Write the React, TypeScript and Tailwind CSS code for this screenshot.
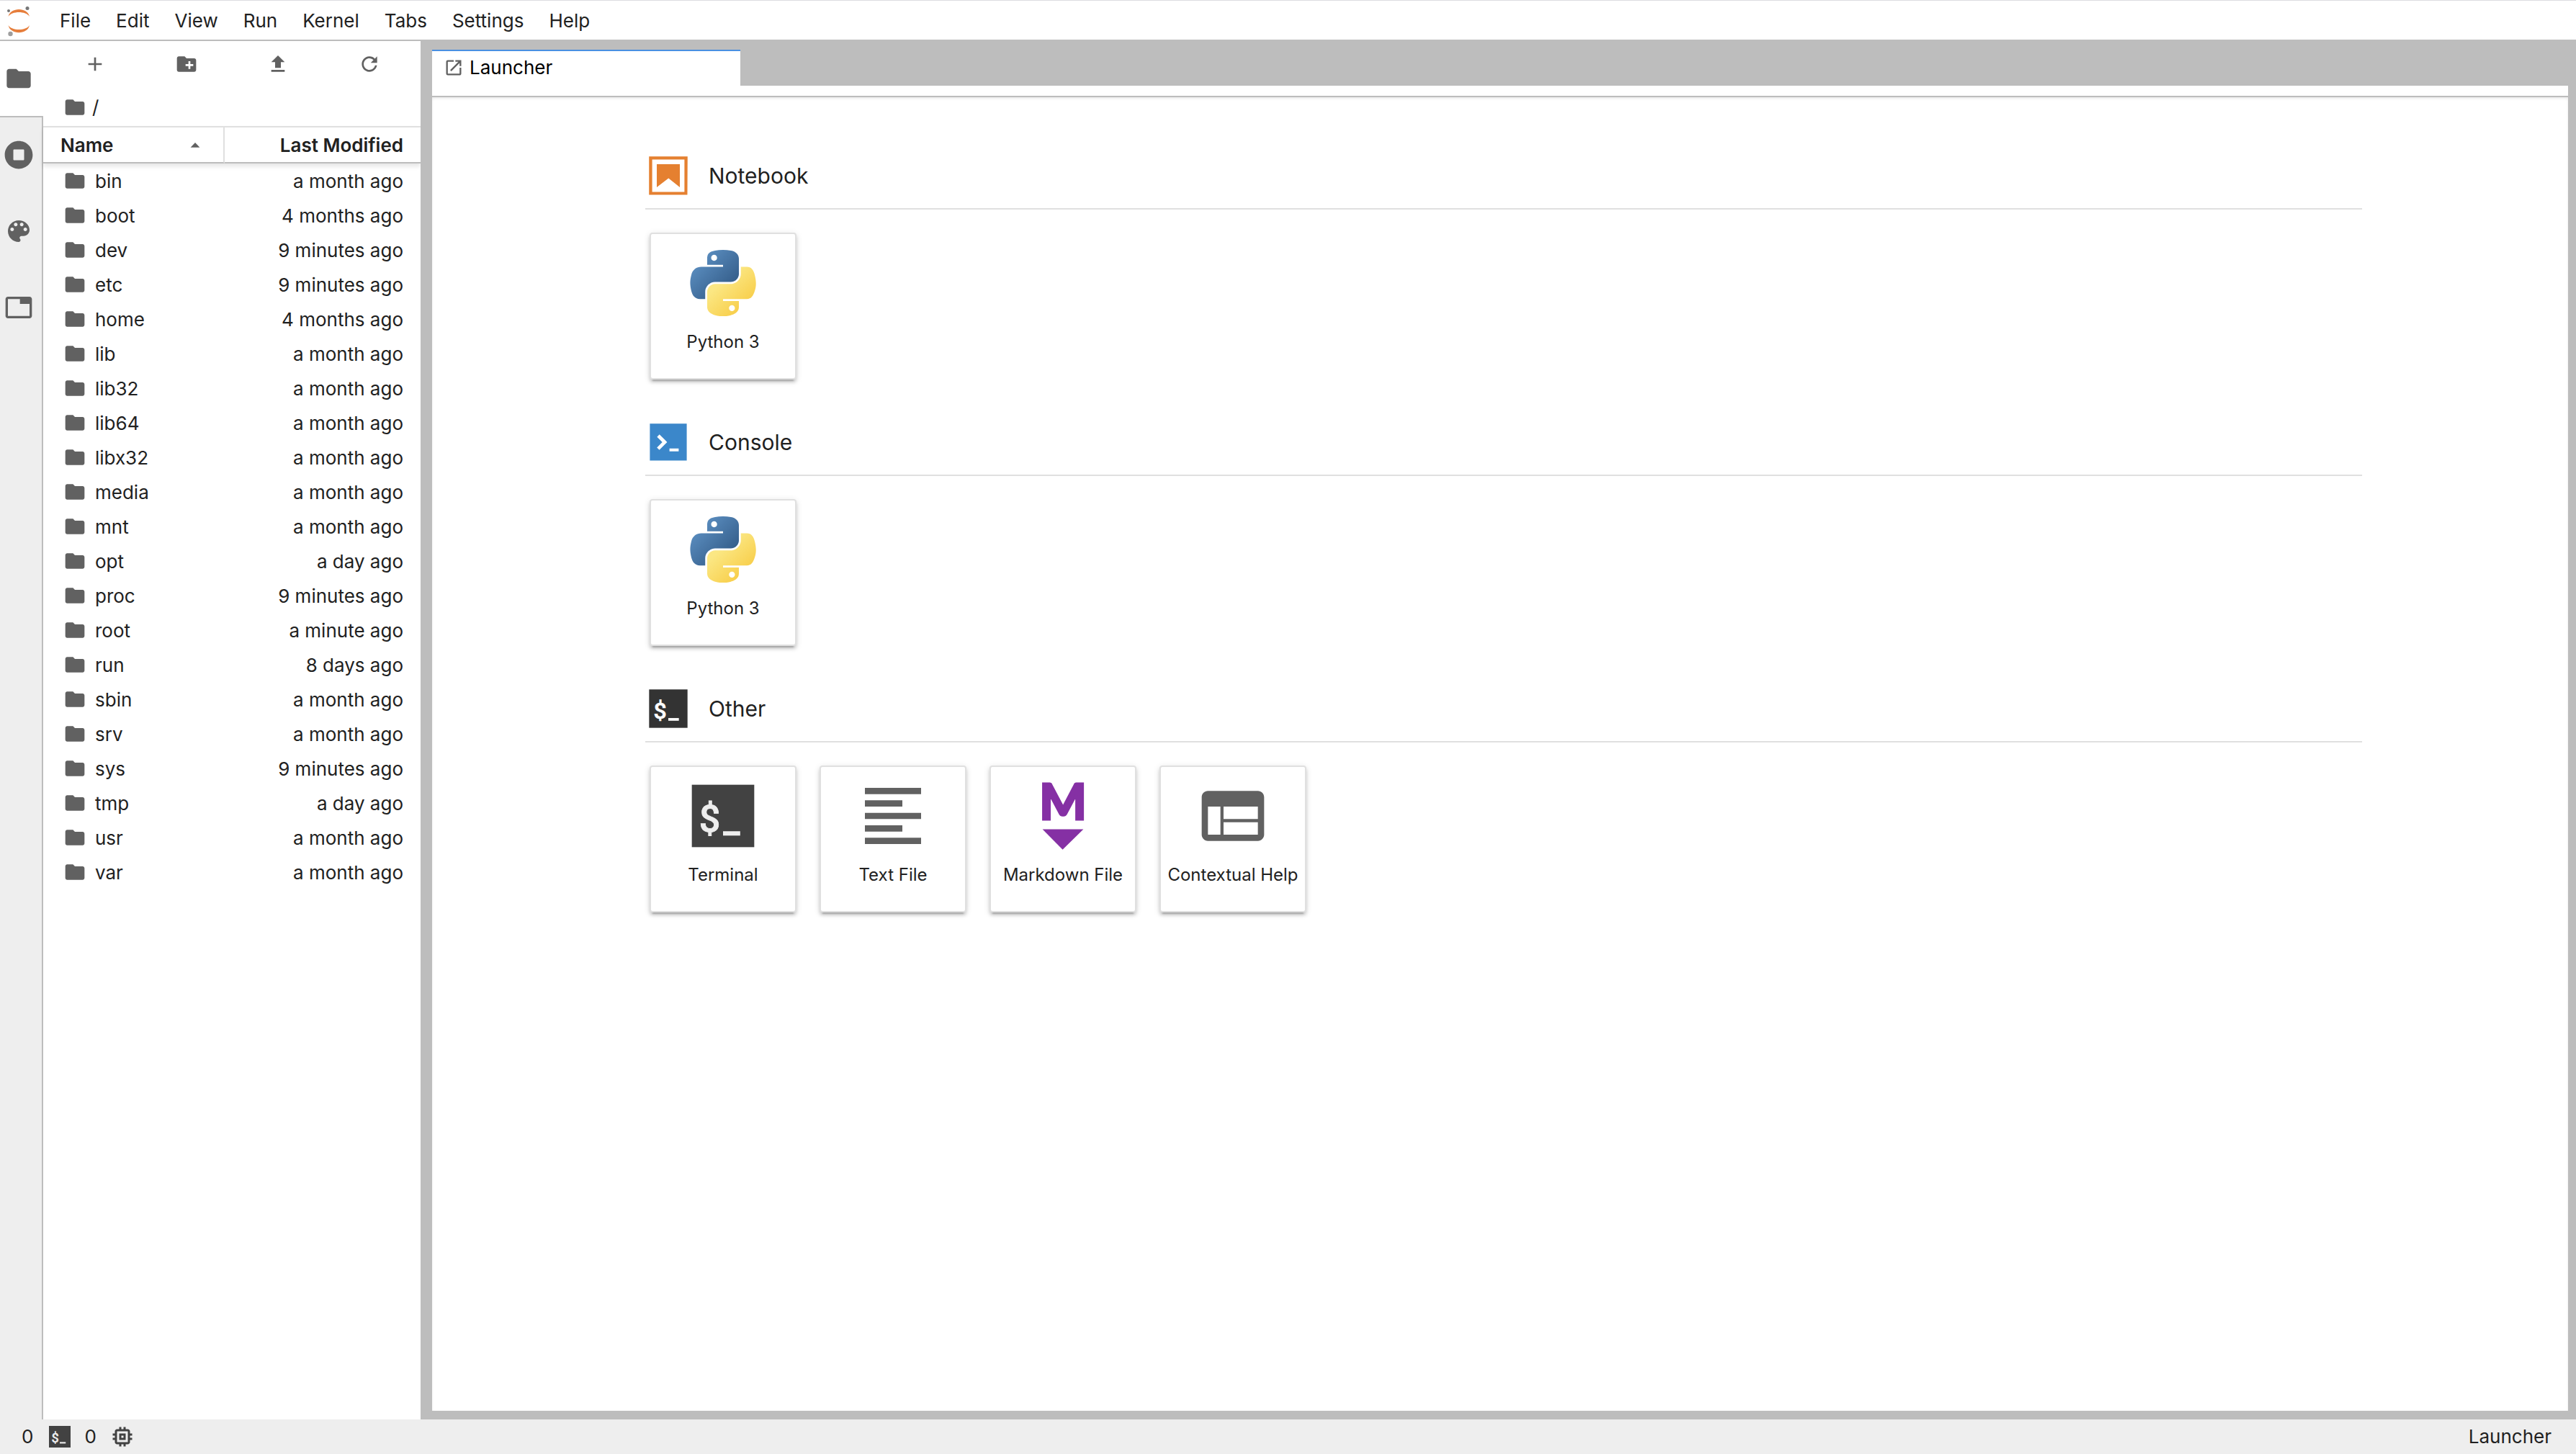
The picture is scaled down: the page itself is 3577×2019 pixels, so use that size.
import React from "react";

const FOLDER =
  "M10 4H4c-1.1 0-1.99.9-1.99 2L2 18c0 1.1.9 2 2 2h16c1.1 0 2-.9 2-2V8c0-1.1-.9-2-2-2h-8l-2-2z";

function Icon({ d, className, box = 24 }: { d: string; className: string; box?: number }) {
  return (
    <svg viewBox={`0 0 ${box} ${box}`} className={className} fill="currentColor" aria-hidden="true">
      <path d={d} />
    </svg>
  );
}

function JupyterLogo() {
  return (
    <svg viewBox="0 0 52 54" className="h-[54px] w-[52px] shrink-0" aria-label="Jupyter">
      <path d="M11.5 22C14 8.5 38.5 8.5 41 22C36 14 16.500 14 11.500 22z" fill="#e67e3c" />
      <path d="M11.500 34C14 47.500 38.500 47.500 41 34C36 42 16.500 42 11.500 34z" fill="#e67e3c" />
      <circle cx="12" cy="14" r="2" fill="#767677" />
      <circle cx="38" cy="10.500" r="2.500" fill="#767677" />
      <circle cx="14.500" cy="46" r="3.200" fill="#9e9e9e" />
    </svg>
  );
}

function PythonLogo() {
  return (
    <svg viewBox="0 0 111 112" className="h-[92px] w-[92px]" aria-hidden="true">
      <defs>
        <linearGradient id="py-blue" x1="0.1" y1="0.1" x2="0.75" y2="0.75">
          <stop offset="0" stopColor="#5f93c6" />
          <stop offset="1" stopColor="#38628f" />
        </linearGradient>
        <linearGradient id="py-yellow" x1="0.3" y1="0.3" x2="0.75" y2="0.8">
          <stop offset="0" stopColor="#fbe783" />
          <stop offset="1" stopColor="#f8cf4c" />
        </linearGradient>
      </defs>
      <path
        fill="url(#py-blue)"
        d="M54.919 0C50.335.022 45.958.413 42.106 1.095 30.760 3.099 28.700 7.295 28.700 15.032V25.251H55.513V28.657H18.638C10.845 28.657 4.022 33.341 1.888 42.251-.574 52.464-.683 58.837 1.888 69.501 3.793 77.439 8.345 83.095 16.138 83.095H25.356V70.845C25.356 61.995 33.013 54.188 42.106 54.188H68.888C76.342 54.188 82.294 48.050 82.294 40.563V15.032C82.294 7.766 76.164 2.307 68.888 1.095 64.282.328 59.502-.020 54.919 0zM40.419 8.220C43.188 8.220 45.450 10.518 45.450 13.345 45.450 16.161 43.188 18.438 40.419 18.438 37.639 18.438 35.388 16.161 35.388 13.345 35.388 10.518 37.639 8.220 40.419 8.220z"
      />
      <path
        fill="url(#py-yellow)"
        d="M85.638 28.657V40.563C85.638 49.794 77.812 57.563 68.888 57.563H42.106C34.771 57.563 28.700 63.842 28.700 71.188V96.720C28.700 103.986 35.019 108.260 42.106 110.345 50.593 112.840 58.732 113.291 68.888 110.345 75.638 108.390 82.294 104.457 82.294 96.720V86.501H55.513V83.095H95.700C103.493 83.095 106.396 77.659 109.106 69.501 111.906 61.102 111.786 53.026 109.106 42.251 107.180 34.493 103.502 28.657 95.700 28.657H85.638zM70.575 93.313C73.354 93.313 75.606 95.591 75.606 98.407 75.606 101.234 73.354 103.532 70.575 103.532 67.805 103.532 65.544 101.234 65.544 98.407 65.544 95.591 67.805 93.313 70.575 93.313z"
      />
    </svg>
  );
}

function TerminalIcon({ className, bg, fg }: { className: string; bg: string; fg: string }) {
  return (
    <svg viewBox="0 0 24 24" className={className} aria-hidden="true">
      <rect x="2" y="2" width="20" height="20" fill={bg} />
      <text
        x="4.300"
        y="17.100"
        fontSize="12"
        fontWeight="500"
        fill={fg}
        stroke={fg}
        strokeWidth="0.200"
        className="font-['Roboto',sans-serif]"
      >
        $
      </text>
      <rect x="12" y="16.900" width="5.500" height="1.400" fill={fg} />
    </svg>
  );
}

function NotebookIcon() {
  return (
    <svg viewBox="0 0 22 22" className="size-16" fill="#e58030" aria-hidden="true">
      <path d="M18.700 3.300v15.400H3.300V3.300h15.400m1.500-1.500H1.800v18.300h18.300l.1-18.300z" />
      <path d="M16.500 16.500l-5.400-4.300-5.600 4.300v-11h11z" />
    </svg>
  );
}

function ConsoleIcon() {
  return (
    <svg viewBox="0 0 200 200" className="size-16" aria-hidden="true">
      <path fill="#3b87ca" d="M20 19.800h160v159.900H20z" />
      <path
        fill="#fff"
        d="M105 127.300h40v12.800h-40zM51.100 77L74 99.900l-23.300 23.300 10.500 10.500 23.300-23.300L95 99.900 84.500 89.400 61.600 66.500z"
      />
    </svg>
  );
}

function MarkdownIcon() {
  return (
    <svg viewBox="0 0 22 22" className="size-[104px] overflow-visible" fill="#8530a4" aria-hidden="true">
      <text
        x="11"
        y="12.100"
        fontSize="14.600"
        fontWeight="900"
        textAnchor="middle"
        stroke="#8530a4"
        strokeWidth="0.600"
        className="font-['Lato',sans-serif]"
      >
        M
      </text>
      <path d="M5 14.900h12l-6.100 6z" />
    </svg>
  );
}

const MENUS = ["File", "Edit", "View", "Run", "Kernel", "Tabs", "Settings", "Help"];

const FILES: [string, string][] = [
  ["bin", "a month ago"],
  ["boot", "4 months ago"],
  ["dev", "9 minutes ago"],
  ["etc", "9 minutes ago"],
  ["home", "4 months ago"],
  ["lib", "a month ago"],
  ["lib32", "a month ago"],
  ["lib64", "a month ago"],
  ["libx32", "a month ago"],
  ["media", "a month ago"],
  ["mnt", "a month ago"],
  ["opt", "a day ago"],
  ["proc", "9 minutes ago"],
  ["root", "a minute ago"],
  ["run", "8 days ago"],
  ["sbin", "a month ago"],
  ["srv", "a month ago"],
  ["sys", "9 minutes ago"],
  ["tmp", "a day ago"],
  ["usr", "a month ago"],
  ["var", "a month ago"],
];

const SIDE_TABS = [
  {
    label: "Running Terminals and Kernels",
    box: 512,
    d: "M256 8C119 8 8 119 8 256s111 248 248 248 248-111 248-248S393 8 256 8zm96 328c0 8.800-7.200 16-16 16H176c-8.800 0-16-7.200-16-16V176c0-8.800 7.200-16 16-16h160c8.800 0 16 7.200 16 16v160z",
  },
  {
    label: "Commands",
    box: 24,
    d: "M12 3c-4.970 0-9 4.030-9 9s4.030 9 9 9c.83 0 1.500-.67 1.500-1.500 0-.39-.15-.74-.39-1.010-.23-.26-.38-.61-.38-.99 0-.83.67-1.500 1.500-1.500H16c2.760 0 5-2.240 5-5 0-4.420-4.030-8-9-8zm-5.500 9c-.83 0-1.500-.67-1.500-1.500S5.670 9 6.500 9 8 9.670 8 10.500 7.330 12 6.500 12zm3-4C8.670 8 8 7.330 8 6.500S8.670 5 9.500 5s1.500.67 1.500 1.500S10.330 8 9.500 8zm5 0c-.83 0-1.500-.67-1.500-1.500S13.670 5 14.500 5s1.500.67 1.500 1.500S15.330 8 14.500 8zm3 4c-.83 0-1.500-.67-1.500-1.500S16.670 9 17.500 9s1.500.67 1.500 1.500-.67 1.500-1.500 1.500z",
  },
  {
    label: "Open Tabs",
    box: 24,
    d: "M21 3H3c-1.100 0-2 .9-2 2v14c0 1.100.9 2 2 2h18c1.100 0 2-.9 2-2V5c0-1.100-.9-2-2-2zm0 16H3V5h10v4h8v10z",
  },
];

const TOOLS = [
  { label: "New Launcher", box: 24, d: "M19 13h-6v6h-2v-6H5v-2h6V5h2v6h6v2z" },
  {
    label: "New Folder",
    box: 24,
    d: "M20 6h-8l-2-2H4c-1.110 0-1.990.89-1.990 2L2 18c0 1.110.89 2 2 2h16c1.110 0 2-.89 2-2V8c0-1.110-.89-2-2-2zm-1 8h-3v3h-2v-3h-3v-2h3V9h2v3h3v2z",
  },
  { label: "Upload Files", box: 24, d: "M9 16h6v-6h4l-7-7-7 7h4zm-4 2h14v2H5z" },
  {
    label: "Refresh File List",
    box: 18,
    d: "M9 13.500c-2.490 0-4.500-2.010-4.500-4.500S6.510 4.500 9 4.500c1.240 0 2.360.52 3.170 1.330L10 8h5V3l-1.760 1.760C12.150 3.680 10.660 3 9 3 5.690 3 3.010 5.690 3.010 9S5.690 15 9 15c2.970 0 5.430-2.160 5.900-5h-1.520c-.46 2-2.240 3.500-4.380 3.500z",
  },
];

const SECTIONS = [
  {
    title: "Notebook",
    icon: <NotebookIcon />,
    cards: [{ label: "Python 3", icon: <PythonLogo /> }],
  },
  {
    title: "Console",
    icon: <ConsoleIcon />,
    cards: [{ label: "Python 3", icon: <PythonLogo /> }],
  },
  {
    title: "Other",
    icon: <TerminalIcon className="size-16" bg="#333333" fg="#ffffff" />,
    cards: [
      { label: "Terminal", icon: <TerminalIcon className="size-[104px]" bg="#424242" fg="#eeeeee" /> },
      {
        label: "Text File",
        icon: (
          <Icon
            className="size-[104px] text-[#616161]"
            d="M15 15H3v2h12v-2zm0-8H3v2h12V7zM3 13h18v-2H3v2zm0 8h18v-2H3v2zM3 3v2h18V3H3z"
          />
        ),
      },
      { label: "Markdown File", icon: <MarkdownIcon /> },
      {
        label: "Contextual Help",
        icon: (
          <Icon
            className="size-[104px] text-[#616161]"
            d="M20 4H4c-1.100 0-2 .9-2 2v12c0 1.100.9 2 2 2h16c1.100 0 2-.9 2-2V6c0-1.100-.9-2-2-2zM8 18H4V9h4v9zm12 0H9v-4h11v4zm0-5H9V9h11v4z"
          />
        ),
      },
    ],
  },
];

function FileBrowser() {
  return (
    <section className="flex w-[524px] shrink-0 flex-col bg-white" aria-label="File Browser">
      <div className="flex h-16 items-center px-2">
        {TOOLS.map((t) => (
          <button key={t.label} aria-label={t.label} className="flex flex-1 justify-center text-[#616161]">
            <Icon d={t.d} box={t.box} className="size-8" />
          </button>
        ))}
      </div>
      <div className="flex h-[54px] items-center gap-2 pt-0.5 pl-7">
        <button aria-label="Home" className="text-[#616161]">
          <Icon d={FOLDER} className="size-8" />
        </button>
        <span>/</span>
      </div>
      <table className="w-full table-fixed border-separate border-spacing-0">
        <thead className="shadow-[0_4px_6px_rgba(0,0,0,0.1)]">
          <tr>
            <th className="h-[52px] w-[252px] border-y-2 border-r-2 border-t-[#e0e0e0] border-r-[#e0e0e0] border-b-[#bdbdbd] p-0 font-semibold">
              <button className="flex w-full items-center justify-between pt-0.5 pr-7 pl-6">
                Name
                <Icon d="M5 15h14l-7-7.500z" className="size-[22px] text-[#616161]" />
              </button>
            </th>
            <th className="h-[52px] border-y-2 border-t-[#e0e0e0] border-b-[#bdbdbd] p-0 font-semibold">
              <button className="w-full pt-0.5 pr-6 text-right">Last Modified</button>
            </th>
          </tr>
        </thead>
        <tbody>
          {FILES.map(([name, when]) => (
            <tr key={name}>
              <td className="h-12 p-0">
                <div className="flex items-center gap-3 pl-7">
                  <Icon d={FOLDER} className="size-8 text-[#616161]" />
                  <span className="pt-0.5">{name}</span>
                </div>
              </td>
              <td className="h-12 p-0 pt-0.5 pr-6 text-right">{when}</td>
            </tr>
          ))}
        </tbody>
      </table>
    </section>
  );
}

export default function App() {
  return (
    <div className="flex h-screen flex-col overflow-hidden bg-white font-['Inter',sans-serif] text-[26px] leading-8 text-[#212121]">
      <header className="flex h-[57px] shrink-0 items-center border-t border-b-2 border-t-[#dcdce0] border-b-[#bdbdbd]">
        <JupyterLogo />
        <nav className="flex gap-[3px] pt-0.5 pl-[15px]" aria-label="Main menu">
          {MENUS.map((m) => (
            <button key={m} className="px-4">
              {m}
            </button>
          ))}
        </nav>
      </header>

      <div className="flex min-h-0 flex-1">
        <aside className="flex w-[60px] shrink-0 flex-col text-[#616161]">
          <button aria-label="File Browser" className="flex h-[104px] items-center justify-center pr-2">
            <Icon d={FOLDER} className="size-10" />
          </button>
          <div className="flex flex-1 flex-col gap-0.5 border-t-2 border-r-2 border-[#bdbdbd] bg-[#eeeeee]">
            {SIDE_TABS.map((t) => (
              <button key={t.label} aria-label={t.label} className="flex h-[104px] items-center justify-center pr-1.5">
                <Icon d={t.d} box={t.box} className="size-10" />
              </button>
            ))}
          </div>
        </aside>

        <FileBrowser />

        <div className="flex min-w-0 flex-1 flex-col bg-[#bdbdbd] pt-3 pr-[11px] pb-3 pl-4">
          <div className="flex h-[50px] shrink-0" role="tablist">
            <button
              role="tab"
              aria-selected="true"
              className="flex w-[428px] items-center gap-2 border-t-2 border-[#4a90e2] bg-white pb-0.5 pl-4 text-black"
            >
              <Icon
                className="size-7 text-[#616161]"
                d="M19 19H5V5h7V3H5a2 2 0 00-2 2v14a2 2 0 002 2h14c1.100 0 2-.9 2-2v-7h-2v7zM14 3v2h3.590l-9.830 9.830 1.410 1.410L19 6.410V10h2V3h-7z"
              />
              Launcher
            </button>
          </div>
          <div className="h-4 shrink-0 border-b-2 border-[#bdbdbd] bg-white" />
          <main className="flex-1 overflow-hidden bg-white pt-[77px] pr-[286px] pl-[296px] shadow-[inset_0_2px_4px_-1px_rgba(0,0,0,0.12)]">
            {SECTIONS.map((s) => (
              <section key={s.title} className="mb-[55px]">
                <div className="flex items-center gap-6 border-b-2 border-[#e0e0e0] pb-[13px]">
                  {s.icon}
                  <h2 className="text-[30px] leading-10">{s.title}</h2>
                </div>
                <div className="flex flex-wrap gap-8 pt-8 pl-1.5">
                  {s.cards.map((c) => (
                    <button
                      key={c.label}
                      className="flex size-[204px] flex-col items-center rounded border-2 border-[#e0e0e0] bg-white shadow-[0_6px_2px_-4px_rgba(0,0,0,0.2),0_4px_4px_0_rgba(0,0,0,0.14),0_2px_10px_0_rgba(0,0,0,0.12)]"
                    >
                      <span className="flex h-[136px] items-center justify-center">{c.icon}</span>
                      <span className="text-[24px] leading-7 whitespace-nowrap">{c.label}</span>
                    </button>
                  ))}
                </div>
              </section>
            ))}
          </main>
        </div>
      </div>

      <footer className="flex h-12 shrink-0 items-center justify-between bg-[#eeeeee] pr-[34px] pl-[30px]">
        <div className="flex items-center">
          <span>0</span>
          <TerminalIcon className="mr-4 ml-[19px] size-9" bg="#424242" fg="#eeeeee" />
          <span>0</span>
          <Icon
            className="ml-[18px] size-9 text-[#424242]"
            d="M15 9H9v6h6V9zm-2 4h-2v-2h2v2zm8-2V9h-2V7c0-1.100-.9-2-2-2h-2V3h-2v2h-2V3H9v2H7c-1.100 0-2 .9-2 2v2H3v2h2v2H3v2h2v2c0 1.100.9 2 2 2h2v2h2v-2h2v2h2v-2h2c1.100 0 2-.9 2-2v-2h2v-2h-2v-2h2zm-4 6H7V7h10v10z"
          />
        </div>
        <span>Launcher</span>
      </footer>
    </div>
  );
}
